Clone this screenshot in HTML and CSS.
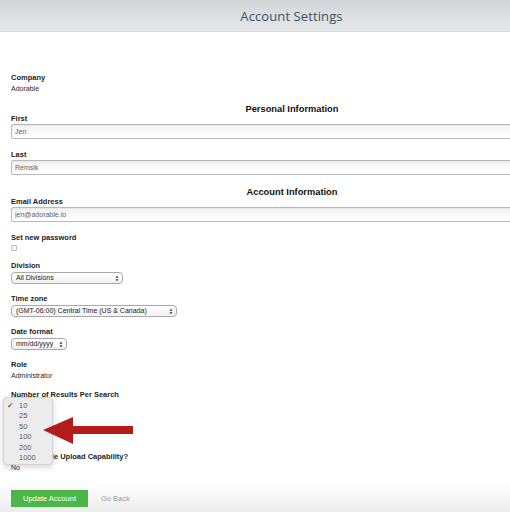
FILE: index.html
```html
<!DOCTYPE html>
<html lang="en">
<head>
    <meta charset="UTF-8">
    <title>Account Settings</title>
    <link rel="stylesheet" href="styles.css">
</head>
<body>
    <div class="topbar">
        <h1 class="title">Account Settings</h1>
    </div>

    <form class="settings">
        <div class="field">
            <span class="label">Company</span>
            <span class="value">Adorable</span>
        </div>

        <h2 class="section">Personal Information</h2>
        <div class="field">
            <label class="label">First</label>
            <input class="text" type="text" value="Jen">
        </div>
        <div class="field">
            <label class="label">Last</label>
            <input class="text" type="text" value="Remsik">
        </div>

        <h2 class="section">Account Information</h2>
        <div class="field">
            <label class="label">Email Address</label>
            <input class="text" type="text" value="jen@adorable.io">
        </div>
        <div class="field">
            <label class="label">Set new password</label>
            <input class="check" type="checkbox">
        </div>
        <div class="field">
            <label class="label">Division</label>
            <div class="select w-division">
                <span>All Divisions</span>
                <svg class="arrows" viewBox="0 0 6 10"><path d="M3 1 L5.2 4 H0.8Z M3 9 L5.2 6 H0.8Z"/></svg>
            </div>
        </div>
        <div class="field">
            <label class="label">Time zone</label>
            <div class="select w-zone">
                <span>(GMT-06:00) Central Time (US &amp; Canada)</span>
                <svg class="arrows" viewBox="0 0 6 10"><path d="M3 1 L5.2 4 H0.8Z M3 9 L5.2 6 H0.8Z"/></svg>
            </div>
        </div>
        <div class="field">
            <label class="label">Date format</label>
            <div class="select w-date">
                <span>mm/dd/yyyy</span>
                <svg class="arrows" viewBox="0 0 6 10"><path d="M3 1 L5.2 4 H0.8Z M3 9 L5.2 6 H0.8Z"/></svg>
            </div>
        </div>
        <div class="field">
            <span class="label">Role</span>
            <span class="value">Administrator</span>
        </div>
        <div class="field results">
            <label class="label">Number of Results Per Search</label>
            <div class="select w-results">
                <span>10</span>
            </div>
            <!-- open dropdown -->
            <ul class="menu">
                <li class="picked">10</li>
                <li>25</li>
                <li>50</li>
                <li>100</li>
                <li>200</li>
                <li>1000</li>
            </ul>
            <svg class="pointer" viewBox="0 0 90 32">
                <path d="M0 15 L30 2 L30 11 L90 11 L90 19 L30 19 L30 29 Z"/>
            </svg>
        </div>
        <div class="field">
            <span class="label">Has Bulk File Upload Capability?</span>
            <span class="value">No</span>
        </div>
    </form>

    <div class="footer">
        <button class="btn" type="button">Update Account</button>
        <a class="back" href="#">Go Back</a>
    </div>
</body>
</html>
```

FILE: styles.css
```css
*{
    margin: 0;
    padding: 0;
    box-sizing: border-box;
}
body{
    width: 510px;
    height: 512px;
    overflow: hidden;
    font-family: "Liberation Sans", Arial, sans-serif;
    color: #222;
    background: #fff;
    position: relative;
}
.topbar{
    height: 32px;
    width: 583px;
    background: linear-gradient(#d3d6d9, #e6e7e9);
    border-bottom: 1px solid #d9dadc;
    display: flex;
    align-items: center;
    justify-content: center;
}
.title{
    font-family: "Open Sans", sans-serif;
    font-weight: 400;
    font-size: 13px;
    color: #3e5163;
    letter-spacing: 0.1px;
}
.settings{
    width: 573px;
    padding: 41px 0 0 11px;
    display: flex;
    flex-direction: column;
}
.field{
    display: flex;
    flex-direction: column;
    align-items: flex-start;
    margin-bottom: 10px;
}
.label{
    font-size: 7.5px;
    font-weight: bold;
    line-height: 9px;
    color: #1c1c1c;
}
.value{
    font-size: 7px;
    line-height: 9px;
    margin-top: 2px;
    color: #2a2a2a;
}
.section{
    font-size: 9.3px;
    font-weight: bold;
    line-height: 11px;
    text-align: center;
    color: #111;
    margin: 1px 0 -1px;
}
.text{
    width: 560px;
    height: 15px;
    margin: 1px 0 1px;
    border: 1px solid #b9b9b9;
    border-radius: 2px;
    background: linear-gradient(#f2f2f2, #fafafa 60%, #fff);
    font-family: inherit;
    font-size: 7px;
    color: #666;
    padding-left: 3px;
    box-shadow: inset 0 1px 1px rgba(0,0,0,0.05);
}
.check{
    appearance: none;
    width: 6px;
    height: 6px;
    margin-top: 3px;
    border: 1px solid #bdbdbd;
    border-radius: 1px;
    background: #f4f4f4;
}
.select{
    position: relative;
    height: 12px;
    margin-top: 2px;
    border: 1px solid #a9a9a9;
    border-radius: 4px;
    background: linear-gradient(#fff, #f1f1f1);
    font-size: 7px;
    line-height: 10px;
    color: #222;
    padding-left: 4px;
    display: flex;
    align-items: center;
}
.w-division{ width: 112px; }
.w-zone{ width: 166px; }
.w-date{ width: 56px; }
.w-results{ width: 34px; }
.arrows{
    position: absolute;
    right: 3px;
    top: 2px;
    width: 4px;
    height: 7px;
    fill: #333;
}
.results{
    position: relative;
    margin-bottom: 39px;
}
.menu{
    position: absolute;
    left: -8px;
    top: 7px;
    width: 50px;
    height: 68px;
    list-style: none;
    background: #ececec;
    border: 1px solid #d3d3d3;
    border-radius: 4px;
    box-shadow: 0 2px 6px rgba(0,0,0,0.18);
    padding-top: 3px;
}
.menu li{
    font-size: 7.5px;
    line-height: 10.4px;
    color: #5a5a5a;
    padding-left: 15px;
    position: relative;
}
.picked::before{
    content: '\2713';
    position: absolute;
    left: 3px;
    top: 0;
    font-family: "DejaVu Sans", sans-serif;
    font-size: 8px;
    color: #222;
}
.pointer{
    position: absolute;
    left: 32px;
    top: 25px;
    width: 90px;
    height: 32px;
    fill: #b21d1c;
}
.footer{
    position: absolute;
    left: 0;
    bottom: 0;
    width: 510px;
    height: 34px;
    padding: 7px 0 0 11px;
    background: linear-gradient(#fff, #fcfcfc 30%, #ebebeb);
    display: flex;
    align-items: center;
    gap: 13px;
}
.btn{
    width: 77px;
    height: 17px;
    border: none;
    background: #4cb648;
    color: #fff;
    font-family: inherit;
    font-size: 7.5px;
}
.back{
    font-size: 7.5px;
    color: #9a9a9a;
    text-decoration: none;
}
```
